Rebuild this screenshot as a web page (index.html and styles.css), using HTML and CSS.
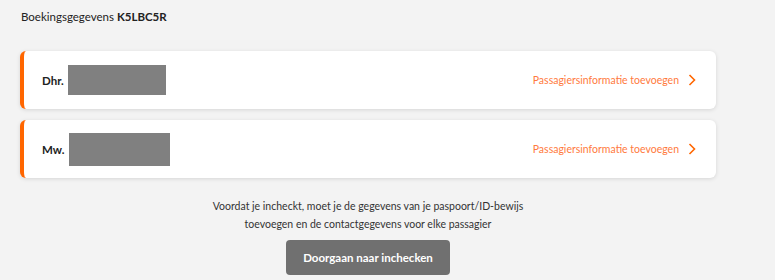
FILE: index.html
```html
<!DOCTYPE html>
<html lang="nl">
<head>
    <meta charset="UTF-8">
    <title>Boekingsgegevens</title>
    <link rel="stylesheet" href="styles.css">
</head>
<body>
    <div class="page">
        <h1 class="booking-title">Boekingsgegevens <strong>K5LBC5R</strong></h1>

        <div class="passengers">
            <div class="passenger-card">
                <div class="passenger-name">
                    <span class="salutation">Dhr.</span>
                    <span class="redacted"></span>
                </div>
                <a class="add-info" href="#">
                    Passagiersinformatie toevoegen
                    <svg class="chevron" viewBox="0 0 8 12" width="8" height="12"><path d="M1.5 1 L6.5 6 L1.5 11" fill="none" stroke="#ff6600" stroke-width="1.6"/></svg>
                </a>
            </div>
            <div class="passenger-card">
                <div class="passenger-name">
                    <span class="salutation">Mw.</span>
                    <span class="redacted wide"></span>
                </div>
                <a class="add-info" href="#">
                    Passagiersinformatie toevoegen
                    <svg class="chevron" viewBox="0 0 8 12" width="8" height="12"><path d="M1.5 1 L6.5 6 L1.5 11" fill="none" stroke="#ff6600" stroke-width="1.6"/></svg>
                </a>
            </div>
        </div>

        <div class="checkin">
            <p>Voordat je incheckt, moet je de gegevens van je paspoort/ID-bewijs<br>toevoegen en de contactgegevens voor elke passagier</p>
            <button class="checkin-button">Doorgaan naar inchecken</button>
        </div>
    </div>
</body>
</html>
```

FILE: styles.css
```css
body {
    margin: 0;
    background-color: #f3f3f3;
    font-family: Lato, 'Open Sans', sans-serif;
    color: #222;
}
.page {
    width: 696px;
    padding: 10px 0 0 20px;
}
.booking-title {
    font-size: 11.5px;
    font-weight: normal;
    margin: 0 0 0 1px;
    line-height: 14px;
}
.booking-title strong {
    font-weight: bold;
}
.passengers {
    display: flex;
    flex-direction: column;
    gap: 11px;
    margin-top: 27px;
}
.passenger-card {
    display: flex;
    justify-content: space-between;
    align-items: center;
    height: 58px;
    background-color: #fff;
    border-left: 4px solid #ff6600;
    border-radius: 6px;
    box-shadow: 0 1px 4px rgba(0,0,0,0.12);
    padding: 0 20px 0 18px;
}
.passenger-name {
    display: flex;
    align-items: center;
    gap: 4px;
}
.salutation {
    font-size: 11.5px;
    font-weight: bold;
}
.redacted {
    display: block;
    width: 98px;
    height: 30px;
    background-color: #808080;
}
.redacted.wide {
    width: 101px;
    height: 33px;
}
.add-info {
    display: flex;
    align-items: center;
    gap: 9px;
    color: #ff7a3d;
    font-size: 10.5px;
    text-decoration: none;
}
.checkin {
    display: flex;
    flex-direction: column;
    align-items: center;
    margin-top: 19px;
}
.checkin p {
    margin: 0;
    font-size: 10.5px;
    line-height: 18px;
    text-align: center;
    color: #333;
}
.checkin-button {
    margin-top: 7px;
    width: 164px;
    height: 35px;
    border: none;
    border-radius: 4px;
    background-color: #707070;
    color: #fff;
    font-family: inherit;
    font-size: 11.5px;
    font-weight: bold;
}
```
